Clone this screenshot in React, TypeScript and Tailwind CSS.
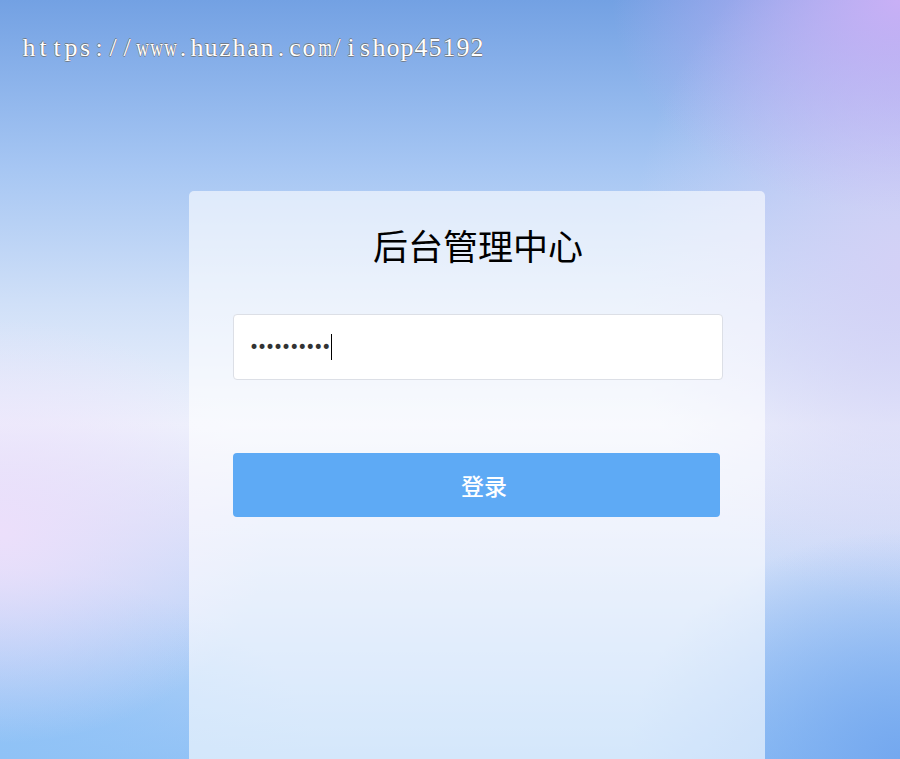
import { useState } from 'react'

const cjk = "font-['Noto_Sans_CJK_SC','Noto_Sans',sans-serif]"
const watermark = 'https://www.huzhan.com/ishop45192'

export default function App() {
  const [password] = useState('1234567890')

  return (
    <div
      className={`relative h-screen w-full overflow-hidden ${cjk} bg-[radial-gradient(ellipse_32%_28%_at_100%_0%,#c9b0f6_0%,rgba(201,176,246,0)_100%),radial-gradient(ellipse_30%_45%_at_100%_35%,#d3d1f6_0%,rgba(211,209,246,0)_100%),radial-gradient(ellipse_30%_28%_at_0%_70%,#ecdffb_0%,rgba(236,223,251,0)_100%),radial-gradient(ellipse_30%_30%_at_100%_100%,#74a8ef_0%,rgba(116,168,239,0)_100%),radial-gradient(ellipse_35%_25%_at_0%_100%,#8fc2f6_0%,rgba(143,194,246,0)_100%),linear-gradient(180deg,#73a1e3_0%,#a6c6f3_22%,#d0e0f8_40%,#eef2fc_56%,#dae2f9_68%,#94c3f6_100%)]`}
    >
      {/* watermark, fixed-pitch serif */}
      <div className="absolute left-[22px] top-[33px] flex font-['Liberation_Serif',serif] text-[26px] leading-[30px] text-white [text-shadow:0.6px_0_rgba(110,110,110,0.75),-0.6px_0_rgba(110,110,110,0.75),0_0.6px_rgba(110,110,110,0.75),0_-0.6px_rgba(110,110,110,0.75)]">
        {watermark.split('').map((ch, i) => (
          <span
            key={i}
            className={
              ch === 'w' || ch === 'm'
                ? 'inline-block w-[14px] scale-x-[0.68] text-center'
                : 'inline-block w-[14px] text-center'
            }
          >
            {ch}
          </span>
        ))}
      </div>

      {/* login card */}
      <div className="ml-[189px] mt-[191px] h-[620px] w-[576px] rounded-[5px] bg-white/60 pl-[44px] pr-[42px] pt-[24px]">
        <h1 className="text-center text-[35px] font-normal leading-[60px] text-black">后台管理中心</h1>

        <div className="mt-[39px] flex h-[66px] items-center rounded-[4px] border border-[#dcdfe6] bg-white pl-[15px]">
          <span className="font-['DejaVu_Sans',sans-serif] text-[17px] leading-none tracking-[-2px] text-[#333]">
            {'•'.repeat(password.length)}
          </span>
          <span className="ml-[2px] h-[26px] w-px bg-black" />
        </div>

        <button className="mt-[73px] flex h-[64px] w-[487px] items-center justify-center rounded-[4px] bg-[#5eaaf5] pl-[15px] text-[23px] font-medium text-white">
          登录
        </button>
      </div>
    </div>
  )
}
